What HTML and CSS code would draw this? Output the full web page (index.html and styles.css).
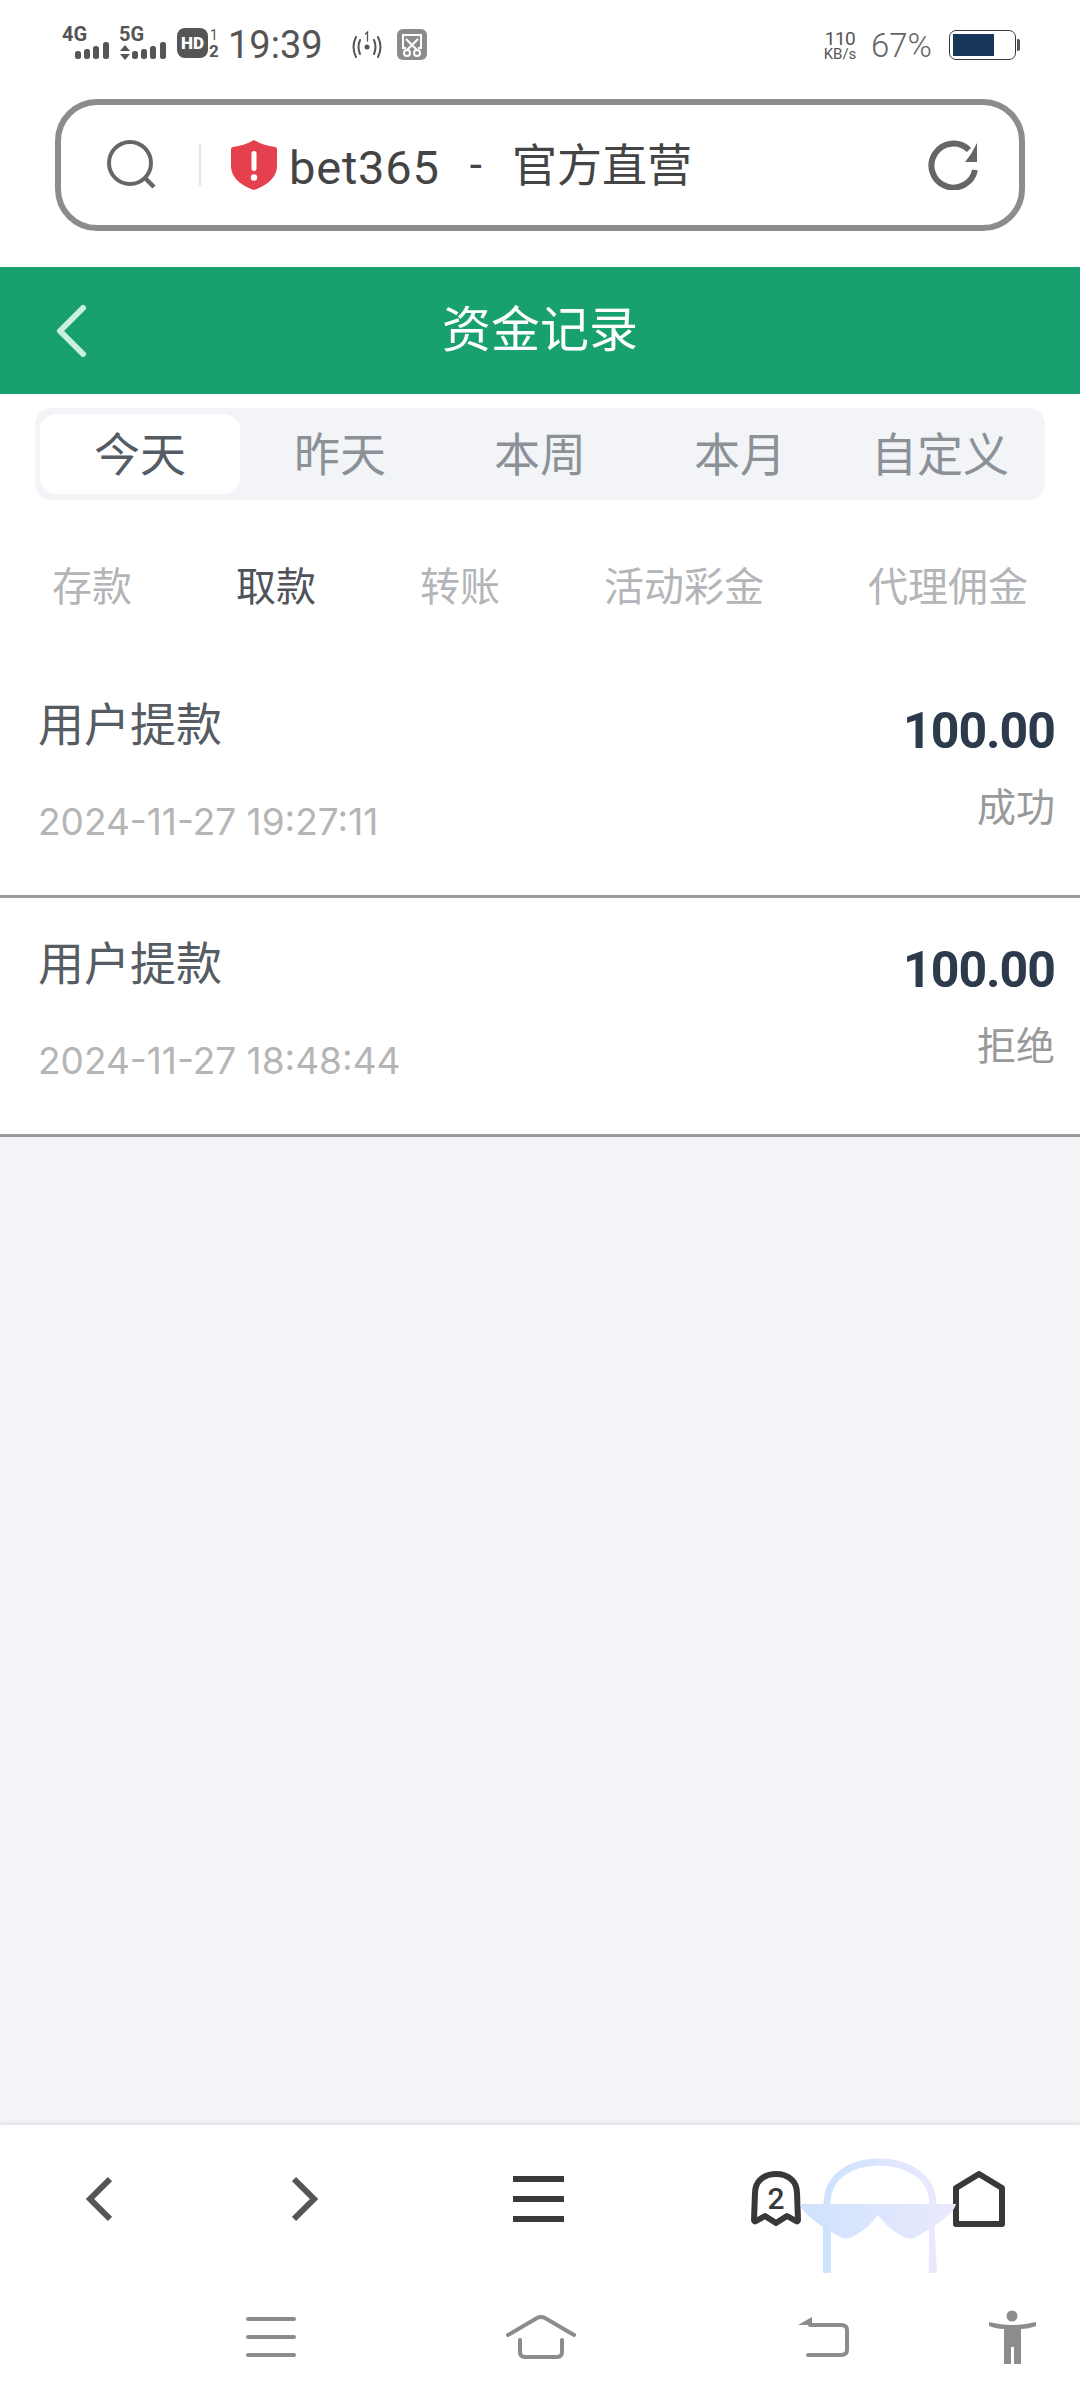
FILE: index.html
```html
<!DOCTYPE html>
<html lang="zh-CN">
<head>
    <meta charset="UTF-8">
    <meta name="viewport" content="width=device-width, initial-scale=1.0">
    <title>资金记录</title>
    <link rel="stylesheet" href="styles.css">
</head>
<body>
    <div class="status-bar">
        <svg class="status-signal" viewBox="58 16 161 50">
            <text x="62" y="41" class="sig-label">4G</text>
            <g fill="#555">
                <rect x="75" y="51" width="6" height="8" rx="2.5"/>
                <rect x="84" y="49" width="6" height="10" rx="2.5"/>
                <rect x="93" y="46" width="6" height="13" rx="2.5"/>
                <rect x="103" y="42" width="6" height="17" rx="2.5"/>
            </g>
            <text x="119" y="41" class="sig-label">5G</text>
            <g fill="#555">
                <path d="M125 45l5 6h-10zM125 60l5-6h-10z"/>
                <rect x="132" y="51" width="6" height="8" rx="2.5"/>
                <rect x="141" y="49" width="6" height="10" rx="2.5"/>
                <rect x="150" y="46" width="6" height="13" rx="2.5"/>
                <rect x="160" y="42" width="6" height="17" rx="2.5"/>
                <rect x="177" y="28" width="31" height="30" rx="8"/>
            </g>
            <text x="192.5" y="49" text-anchor="middle" class="sig-hd">HD</text>
            <text x="214" y="40" text-anchor="middle" class="sig-one">1</text>
            <text x="214" y="57" text-anchor="middle" class="sig-two">2</text>
        </svg>
        <span class="status-time">19:39</span>
        <svg class="status-extra" viewBox="350 24 80 42">
            <circle cx="367" cy="47" r="2.5" fill="#555"/>
            <g fill="none" stroke="#555" stroke-width="2" stroke-linecap="round">
                <path d="M360 40q-3 7 0 14M374 40q3 7 0 14M356 37q-5 10 0 20M378 37q5 10 0 20"/>
                <path d="M365.500 34l2-2v9" stroke-width="1.300"/>
            </g>
            <rect x="397" y="29" width="30" height="31" rx="6" fill="#8c8c8c"/>
            <g fill="none" stroke="#fff" stroke-width="2">
                <path d="M406 48h-3v-13h18v13h-3"/>
                <path d="M406 39l11 11M418 39l-11 11"/>
                <circle cx="407" cy="53" r="3"/>
                <circle cx="417" cy="53" r="3"/>
            </g>
        </svg>
        <div class="status-right">
            <div class="net-speed">
                <span class="net-num">110</span>
                <span class="net-unit">KB/s</span>
            </div>
            <span class="battery-text">67%</span>
            <div class="battery">
                <div class="battery-level"></div>
            </div>
            <div class="battery-nub"></div>
        </div>
    </div>

    <div class="address-bar">
        <svg class="addr-search" viewBox="0 0 50 50">
            <circle cx="23" cy="23" r="21" fill="none" stroke="#666" stroke-width="4"/>
            <path d="M38 38l9 9" stroke="#666" stroke-width="4.500" fill="none"/>
        </svg>
        <div class="addr-divider"></div>
        <svg class="addr-shield" viewBox="0 0 46 50">
            <path d="M23 0c7 4 14 6 21 7 1 0 2 1 2 2v17c0 12-11 20-23 24C11 46 0 38 0 26V9c0-1 1-2 2-2 7-1 14-3 21-7z" fill="#e5404e"/>
            <rect x="20.500" y="11" width="5" height="20" rx="2.500" fill="#fff"/>
            <circle cx="23" cy="37.500" r="3.200" fill="#fff"/>
        </svg>
        <span class="addr-site">bet365</span>
        <span class="addr-dash">-</span>
        <span class="addr-name">官方直营</span>
        <svg class="addr-refresh" viewBox="0 0 50 50">
            <path d="M47 30A22 22 0 1 1 41 10" fill="none" stroke="#666" stroke-width="6"/>
            <path d="M49 3V22H37l6-8z" fill="#666"/>
        </svg>
    </div>

    <div class="header">
        <svg class="back-btn" viewBox="0 0 32 52">
            <path d="M28 3L5 26l23 23" fill="none" stroke="#c9efdf" stroke-width="6" stroke-linecap="round" stroke-linejoin="round"/>
        </svg>
        <h1>资金记录</h1>
    </div>

    <div class="date-tabs">
        <div class="date-tab active">今天</div>
        <div class="date-tab">昨天</div>
        <div class="date-tab">本周</div>
        <div class="date-tab">本月</div>
        <div class="date-tab">自定义</div>
    </div>

    <div class="type-tabs">
        <span class="type-tab">存款</span>
        <span class="type-tab active">取款</span>
        <span class="type-tab">转账</span>
        <span class="type-tab">活动彩金</span>
        <span class="type-tab">代理佣金</span>
    </div>

    <div class="record">
        <div class="record-left">
            <div class="record-title">用户提款</div>
            <div class="record-date">2024-11-27 19:27:11</div>
        </div>
        <div class="record-right">
            <div class="record-amount">100.00</div>
            <div class="record-state">成功</div>
        </div>
    </div>
    <div class="record">
        <div class="record-left">
            <div class="record-title">用户提款</div>
            <div class="record-date">2024-11-27 18:48:44</div>
        </div>
        <div class="record-right">
            <div class="record-amount">100.00</div>
            <div class="record-state">拒绝</div>
        </div>
    </div>

    <div class="content"></div>

    <div class="bottom">
        <div class="toolbar">
            <svg class="tool-prev" viewBox="0 0 26 46">
                <path d="M24 3L4 23l20 20" fill="none" stroke="#555" stroke-width="6" stroke-linejoin="miter"/>
            </svg>
            <svg class="tool-next" viewBox="0 0 26 46">
                <path d="M2 3l20 20L2 43" fill="none" stroke="#555" stroke-width="6"/>
            </svg>
            <div class="tool-menu">
                <span></span>
                <span></span>
                <span></span>
            </div>
            <svg class="tool-tabs" viewBox="0 0 52 56">
                <path d="M4 49L5 22C5 10 14 3 26 3s21 7 21 19l1 27c0 1-1 2-2 1l-9-5-11 7-11-7-9 5c-1 1-2 0-2-1z" fill="none" stroke="#383838" stroke-width="6" stroke-linejoin="round"/>
                <text x="26" y="38" text-anchor="middle" class="tab-count">2</text>
            </svg>
            <svg class="tool-home" viewBox="0 0 52 56">
                <path d="M26 3l23 14v36H3V17z" fill="none" stroke="#383838" stroke-width="6" stroke-linejoin="round"/>
            </svg>
        </div>
        <div class="sys-nav">
            <div class="sys-menu">
                <span></span>
                <span></span>
                <span></span>
            </div>
            <svg class="sys-home" viewBox="0 0 70 44">
                <path d="M2 20L31 3q4-2 8 0l29 17" fill="none" stroke="#8c8c8c" stroke-width="4" stroke-linecap="round"/>
                <path d="M14 25v12q0 5 5 5h32q5 0 5-5V25" fill="none" stroke="#8c8c8c" stroke-width="4" stroke-linecap="round"/>
            </svg>
            <svg class="sys-back" viewBox="0 0 51 42">
                <path d="M0 9l14-8v8z" fill="#8c8c8c"/>
                <path d="M12 9h31q6 0 6 5v20q0 5-6 5H10" fill="none" stroke="#8c8c8c" stroke-width="4" stroke-linecap="round"/>
            </svg>
            <svg class="sys-person" viewBox="0 0 47 54">
                <circle cx="23" cy="6" r="5.500" fill="#8c8c8c"/>
                <path d="M0 12c8 2 15 3 23 3s16-1 24-3v4c-5 2-11 3-15 3v35h-7V37h-3v17h-7V19c-5 0-10-1-15-3z" fill="#8c8c8c"/>
            </svg>
        </div>
        <svg class="float-glasses" viewBox="0 0 156 116">
            <defs>
                <linearGradient id="glassFill" x1="0" x2="1" y1="0" y2="0">
                    <stop offset="0" stop-color="#cfe2fd"/>
                    <stop offset="1" stop-color="#e9e9fd"/>
                </linearGradient>
            </defs>
            <path d="M27 46C27 20 49 4 79 4s54 16 54 42" fill="none" stroke="url(#glassFill)" stroke-width="7"/>
            <path d="M0 46h156c-2 8-10 13-20 21l-20 12c-4 2-8 2-12 0-12-6-18-12-26-22-8 10-14 16-26 22-4 2-8 2-12 0L20 67C10 59 2 54 0 46z" fill="url(#glassFill)"/>
            <path d="M23 60v55h8V72zM134 60l3 55h-8V72z" fill="url(#glassFill)"/>
        </svg>
    </div>
</body>
</html>
```

FILE: styles.css
```css
* {
    margin: 0;
    padding: 0;
    box-sizing: border-box;
}

body {
    width: 1080px;
    height: 2400px;
    display: flex;
    flex-direction: column;
    background: #fff;
    overflow: hidden;
    font-family: Roboto, "Noto Sans CJK SC", sans-serif;
}

/* status bar */
.status-bar {
    height: 99px;
    padding: 24px 60px 0 58px;
    display: flex;
    align-items: flex-start;
}

.status-signal {
    margin-top: -8px;
    width: 161px;
    height: 50px;
}

.sig-label {
    font-size: 20px;
    font-weight: 700;
    fill: #555;
}

.sig-hd {
    font-size: 17px;
    font-weight: 900;
    fill: #fff;
}

.sig-one {
    font-size: 14px;
    fill: #555;
}

.sig-two {
    font-size: 17px;
    font-weight: 700;
    fill: #555;
}

.status-time {
    margin-left: 9px;
    font-size: 38px;
    line-height: 42px;
    color: #555;
}

.status-extra {
    margin-left: 27px;
    width: 80px;
    height: 42px;
}

.status-right {
    margin-left: auto;
    display: flex;
    align-items: center;
    height: 42px;
}

.net-speed {
    width: 34px;
    display: flex;
    flex-direction: column;
    align-items: center;
    color: #555;
}

.net-num {
    font-size: 19px;
    line-height: 18px;
    letter-spacing: -0.5px;
}

.net-unit {
    font-size: 15px;
    line-height: 13px;
}

.battery-text {
    margin-left: 14px;
    font-size: 33px;
    font-weight: 300;
    color: #666;
}

.battery {
    margin-left: 17px;
    width: 67px;
    height: 30px;
    padding: 3px;
    border: 1.5px solid #3a3a3a;
    border-radius: 7px;
}

.battery-level {
    width: 41px;
    height: 100%;
    background: #17375a;
}

.battery-nub {
    margin-left: 1px;
    width: 3px;
    height: 12px;
    background: #555;
    border-radius: 0 2px 2px 0;
}

/* address bar */
.address-bar {
    margin: 0 55px 36px;
    height: 132px;
    padding-left: 46px;
    display: flex;
    align-items: center;
    border: 6px solid #8c8c8c;
    border-radius: 42px;
    color: #444;
}

.addr-search {
    width: 50px;
    height: 50px;
}

.addr-divider {
    margin-left: 42px;
    width: 2px;
    height: 42px;
    background: #e5e5e5;
}

.addr-shield {
    margin-left: 30px;
    width: 46px;
    height: 50px;
}

.addr-site {
    margin-left: 12px;
    padding-top: 5px;
    font-size: 47px;
    letter-spacing: 0.8px;
}

.addr-dash {
    margin-left: 30px;
    font-size: 44px;
}

.addr-name {
    margin-left: 30px;
    margin-bottom: 5px;
    font-size: 45px;
}

.addr-refresh {
    margin-left: auto;
    margin-right: 41px;
    width: 50px;
    height: 50px;
}

/* page header */
.header {
    height: 127px;
    display: grid;
    grid-template-columns: 1fr auto 1fr;
    align-items: center;
    background: #18a06f;
    color: #fff;
}

.header h1 {
    font-size: 49px;
    font-weight: 400;
    line-height: 60px;
}

.back-btn {
    margin-left: 55px;
    width: 32px;
    height: 52px;
}

/* date tabs */
.date-tabs {
    margin: 14px 35px 0;
    height: 92px;
    padding: 6px 5px;
    display: grid;
    grid-template-columns: repeat(5, 1fr);
    background: #f2f4f8;
    border-radius: 16px;
}

.date-tab {
    display: flex;
    align-items: center;
    justify-content: center;
    padding-bottom: 6px;
    font-size: 46px;
    color: #8c9197;
    border-radius: 16px;
}

.date-tab.active {
    background: #fff;
    color: #555c63;
}

/* record type tabs */
.type-tabs {
    height: 159px;
    padding: 63px 52px 0;
    display: flex;
    justify-content: space-between;
    font-size: 40px;
    line-height: 50px;
    color: #b3b5b8;
}

.type-tab.active {
    color: #50545a;
}

/* record rows */
.record {
    height: 239px;
    padding: 0 25px 0 38px;
    display: flex;
    justify-content: space-between;
    border-bottom: 3px solid #9a9a9c;
}

.record-left {
    padding-top: 41px;
}

.record-title {
    font-size: 46px;
    line-height: 50px;
    color: #555c63;
}

.record-date {
    margin-top: 47px;
    font-family: Inter, Roboto, sans-serif;
    font-size: 37px;
    line-height: 50px;
    color: #b5b5b5;
}

.record-right {
    padding-top: 42px;
    text-align: right;
}

.record-amount {
    font-size: 50px;
    font-weight: 700;
    line-height: 60px;
    letter-spacing: -1px;
    color: #2c3a4b;
}

.record-state {
    margin-top: 22px;
    font-size: 39px;
    line-height: 50px;
    color: #999;
}

.content {
    flex: 1;
    background: #f2f4f8;
}

/* bottom browser toolbar + system nav */
.bottom {
    position: relative;
    height: 275px;
    background: #fff;
    box-shadow: 0 -2px 3px rgba(0, 0, 0, 0.08);
}

.toolbar {
    height: 148px;
    padding-left: 86px;
    display: flex;
    align-items: center;
}

.tool-prev,
.tool-next {
    width: 26px;
    height: 46px;
}

.tool-next {
    margin-left: 180px;
}

.tool-menu {
    margin-left: 195px;
    width: 51px;
    height: 46px;
    display: flex;
    flex-direction: column;
    justify-content: space-between;
}

.tool-menu span {
    height: 6px;
    background: #3a3a3a;
}

.tool-tabs {
    margin-left: 186px;
    width: 52px;
    height: 56px;
}

.tool-home {
    margin-left: 151px;
    width: 52px;
    height: 56px;
}

.sys-nav {
    height: 127px;
    padding-left: 246px;
    display: flex;
    align-items: center;
}

.sys-menu {
    width: 50px;
    height: 40px;
    display: flex;
    flex-direction: column;
    justify-content: space-between;
}

.sys-menu span {
    height: 4px;
    background: #8c8c8c;
    border-radius: 2px;
}

.sys-home {
    margin-left: 210px;
    width: 70px;
    height: 44px;
}

.sys-back {
    margin-left: 222px;
    width: 51px;
    height: 42px;
}

.sys-person {
    margin-left: 140px;
    width: 47px;
    height: 54px;
}

.tab-count {
    font-size: 30px;
    font-weight: 500;
    fill: #383838;
}

.float-glasses {
    position: absolute;
    left: 800px;
    top: 33px;
    width: 156px;
    height: 116px;
}
```
